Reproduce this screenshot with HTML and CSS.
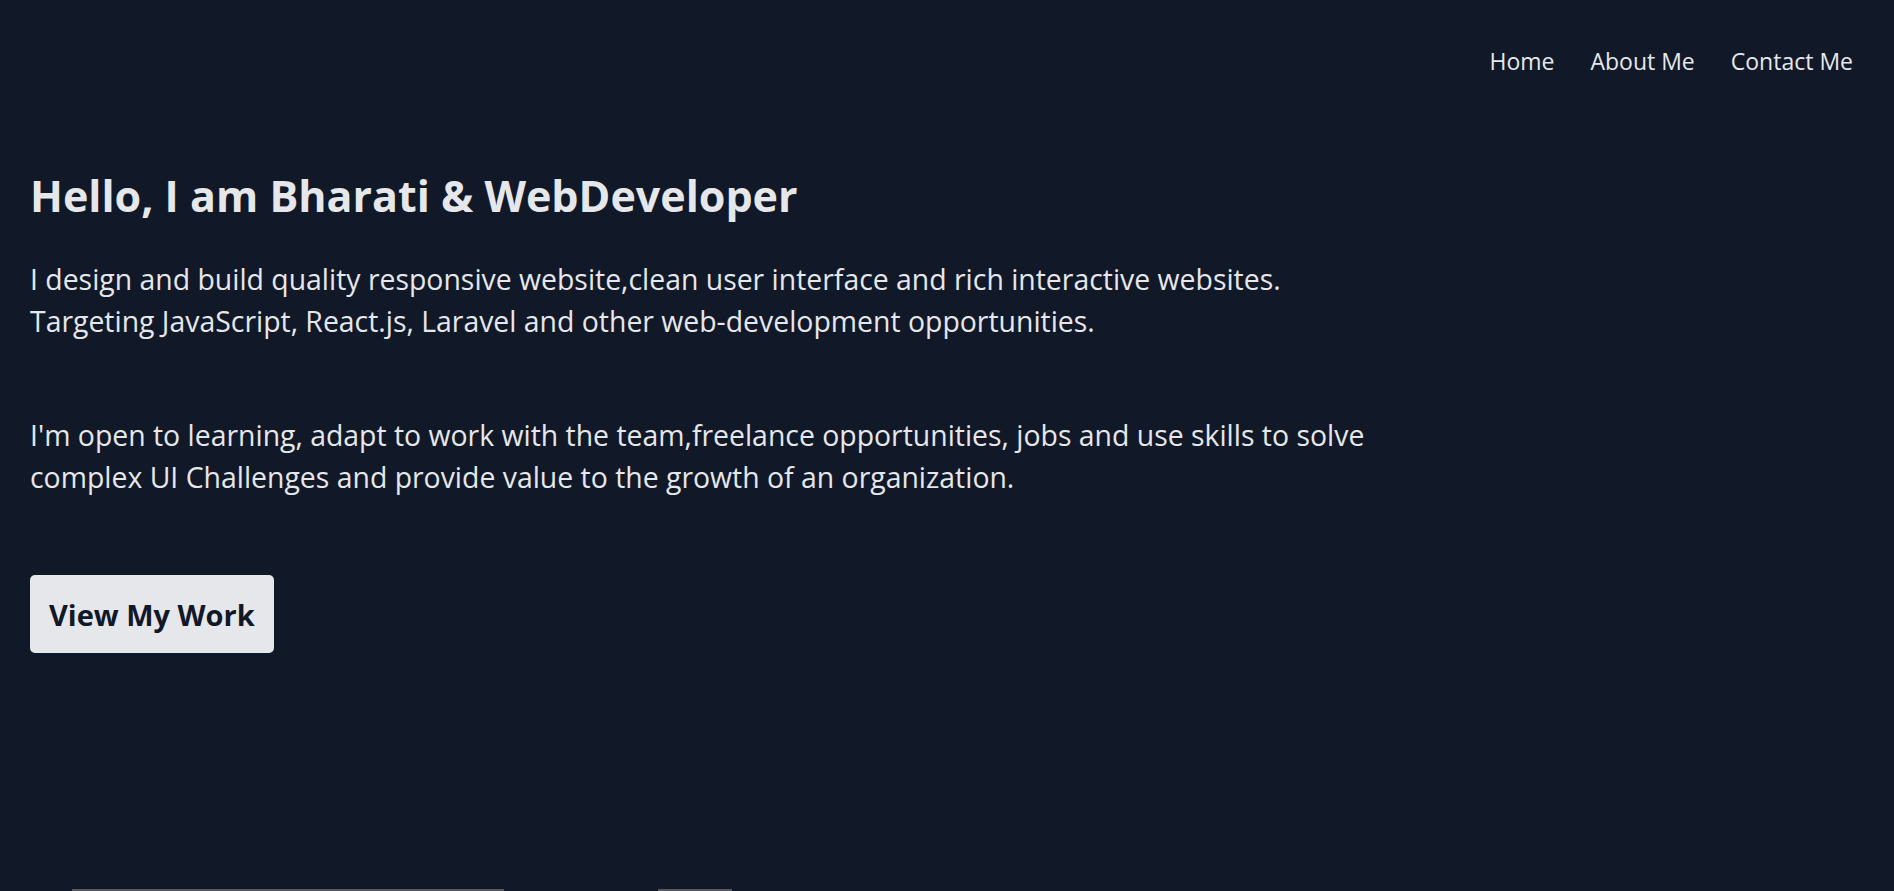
FILE: index.html
```html
<!DOCTYPE html>
<html lang="en">
<head>
<meta charset="utf-8">
<title>Bharati - WebDeveloper</title>
<link rel="stylesheet" href="styles.css">
</head>
<body>
<div class="page">
  <header class="header">
    <nav class="nav">
      <a class="nav-link" href="#">Home</a>
      <a class="nav-link" href="#">About Me</a>
      <a class="nav-link" href="#">Contact Me</a>
    </nav>
  </header>
  <section class="hero">
    <h1 class="hero-title">Hello, I am Bharati &amp; WebDeveloper</h1>
    <p class="hero-text">I design and build quality responsive website,clean user interface and rich interactive websites. Targeting JavaScript, React.js, Laravel and other web-development opportunities.</p>
    <p class="hero-text hero-text-second">I'm open to learning, adapt to work with the team,freelance opportunities, jobs and use skills to solve complex UI Challenges and provide value to the growth of an organization.</p>
    <a class="btn" href="#">View My Work</a>
  </section>
  <section class="projects">
    <div class="project project-wide"></div>
    <div class="project project-small"></div>
  </section>
</div>
</body>
</html>
```
FILE: styles.css
```css
html, body {
  margin: 0;
  padding: 0;
}
body {
  background: #111827;
  color: #e5e7eb;
  font-family: "Open Sans", "Noto Sans", sans-serif;
}
.page {
  height: 100vh;
  overflow: hidden;
}
.header {
  display: flex;
  justify-content: flex-end;
  padding: 46px 41px 0 0;
}
.nav {
  display: flex;
  gap: 36px;
}
.nav-link {
  color: #e5e7eb;
  text-decoration: none;
  font-size: 23px;
  line-height: 30px;
}
.hero {
  padding: 94px 0 0 30px;
}
.hero-title {
  margin: 0;
  font-size: 43px;
  line-height: 52px;
  font-weight: 700;
}
.hero-text {
  margin: 36px 0 0;
  max-width: 1360px;
  font-size: 28.4px;
  line-height: 42px;
}
.hero-text-second {
  margin-top: 72px;
}
.btn {
  display: inline-flex;
  align-items: center;
  height: 78px;
  margin-top: 77px;
  padding: 0 19px;
  box-sizing: border-box;
  background: #e5e7eb;
  color: #111827;
  border-radius: 5px;
  text-decoration: none;
  font-size: 29px;
  font-weight: 700;
}
.projects {
  display: flex;
  gap: 154px;
  padding: 236px 0 0 72px;
}
.project {
  height: 200px;
  background: #55595f;
}
.project-wide {
  width: 432px;
}
.project-small {
  width: 74px;
}
```
